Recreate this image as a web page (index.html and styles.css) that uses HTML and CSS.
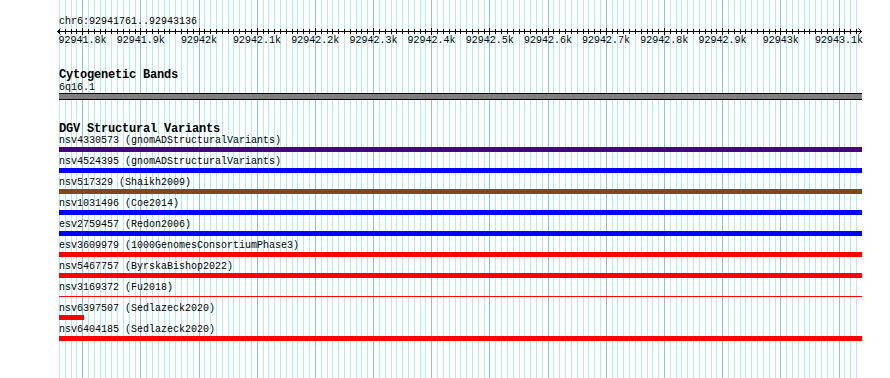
FILE: index.html
```html
<!DOCTYPE html>
<html>
<head>
<meta charset="utf-8">
<link rel="stylesheet" href="styles.css">
</head>
<body>
<div class="browser">
  <svg class="grid" id="grid" width="890" height="378"></svg>
  <div class="tracks">
    <div class="loc">chr6:92941761..92943136</div>
    <svg class="ruler" id="ruler" width="808" height="8">
      <rect class="axis" x="2" y="4" width="805" height="1"></rect>
      <polyline class="arrow" points="5.5,1.5 2.5,4.5 5.5,7.5"></polyline>
      <polyline class="arrow" points="803.5,1.5 806.5,4.5 803.5,7.5"></polyline>
    </svg>
    <div class="ruler-labels">
      <span style="left:23.5px">92941.8k</span>
      <span style="left:81.7px">92941.9k</span>
      <span style="left:139.9px">92942k</span>
      <span style="left:198.1px">92942.1k</span>
      <span style="left:256.2px">92942.2k</span>
      <span style="left:314.4px">92942.3k</span>
      <span style="left:372.6px">92942.4k</span>
      <span style="left:430.8px">92942.5k</span>
      <span style="left:489.0px">92942.6k</span>
      <span style="left:547.1px">92942.7k</span>
      <span style="left:605.3px">92942.8k</span>
      <span style="left:663.5px">92942.9k</span>
      <span style="left:721.7px">92943k</span>
      <span style="left:779.9px">92943.1k</span>
    </div>
    <section class="track cyto">
      <div class="track-title">Cytogenetic Bands</div>
      <div class="band-label">6q16.1</div>
      <div class="band"></div>
    </section>
    <section class="track dgv">
      <div class="track-title">DGV Structural Variants</div>
      <div class="feature"><div class="label">nsv4330573 (gnomADStructuralVariants)</div><div class="bar purple"></div></div>
      <div class="feature"><div class="label">nsv4524395 (gnomADStructuralVariants)</div><div class="bar blue"></div></div>
      <div class="feature"><div class="label">nsv517329 (Shaikh2009)</div><div class="bar brown"></div></div>
      <div class="feature"><div class="label">nsv1031496 (Coe2014)</div><div class="bar blue"></div></div>
      <div class="feature"><div class="label">esv2759457 (Redon2006)</div><div class="bar blue"></div></div>
      <div class="feature"><div class="label">esv3609979 (1000GenomesConsortiumPhase3)</div><div class="bar red"></div></div>
      <div class="feature"><div class="label">nsv5467757 (ByrskaBishop2022)</div><div class="bar red"></div></div>
      <div class="feature"><div class="label">nsv3169372 (Fu2018)</div><div class="bar red thin"></div></div>
      <div class="feature"><div class="label">nsv6397507 (Sedlazeck2020)</div><div class="bar red short"></div></div>
      <div class="feature"><div class="label">nsv6404185 (Sedlazeck2020)</div><div class="bar red"></div></div>
    </section>
  </div>
</div>
<script src="script.js"></script>
</body>
</html>
```

FILE: styles.css
```css
html, body {
  margin: 0;
  padding: 0;
  background: #ffffff;
}

.browser {
  position: relative;
  width: 890px;
  height: 378px;
  overflow: hidden;
  font-family: "Liberation Mono", "DejaVu Sans Mono", monospace;
  font-size: 10px;
  color: #000000;
}

.grid {
  position: absolute;
  left: 0;
  top: 0;
}

.gl {
  fill: #aeeeee;
}

.gl.major {
  fill: #84c4ea;
}

.tracks {
  position: relative;
  padding: 16px 28px 0 59px;
}

.loc {
  line-height: 12px;
  height: 12px;
  white-space: nowrap;
}

.ruler {
  display: block;
  margin: -1px 0 0 -4px;
}

.axis,
.tick {
  fill: #000000;
}

.arrow {
  fill: none;
  stroke: #000000;
  stroke-width: 1;
}

.ruler-labels {
  position: relative;
  height: 12px;
  line-height: 12px;
}

.ruler-labels span {
  position: absolute;
  top: 0;
  transform: translateX(-50%);
  white-space: nowrap;
}

.track-title {
  font-weight: bold;
  font-size: 12px;
  line-height: 12px;
  letter-spacing: -0.2px;
  white-space: nowrap;
}

.cyto {
  margin-top: 22px;
}

.band-label {
  margin-top: 2px;
  line-height: 10px;
  height: 10px;
}

.band {
  width: 803px;
  height: 5px;
  background: #808080;
  border-top: 1px solid #000000;
  border-bottom: 1px solid #000000;
}

.dgv {
  margin-top: 23px;
}

.feature {
  height: 21px;
}

.label {
  line-height: 12px;
  height: 12px;
  white-space: nowrap;
}

.bar {
  width: 803px;
  height: 5px;
}

.bar.purple { background: #4b0082; }
.bar.blue { background: #0000ff; }
.bar.brown { background: #8b4513; }
.bar.red { background: #ff0000; }

.bar.thin {
  height: 1px;
  margin: 2px 0;
}

.bar.short {
  width: 25px;
}
```

FILE: script.js
```js
(function () {
  var NS = "http://www.w3.org/2000/svg";
  var grid = document.getElementById("grid");
  var ruler = document.getElementById("ruler");
  for (var k = 0; k <= 137; k++) {
    var x = Math.floor(59.42 + k * 5.81818);
    var major = (k % 10) === 4;
    var r = document.createElementNS(NS, "rect");
    r.setAttribute("x", x);
    r.setAttribute("y", 0);
    r.setAttribute("width", 1);
    r.setAttribute("height", 378);
    r.setAttribute("class", major ? "gl major" : "gl");
    grid.appendChild(r);

    var t = document.createElementNS(NS, "rect");
    t.setAttribute("x", x - 55);
    t.setAttribute("y", major ? 1 : 2);
    t.setAttribute("width", 1);
    t.setAttribute("height", major ? 7 : 5);
    t.setAttribute("class", "tick");
    ruler.appendChild(t);
  }
})();
```
